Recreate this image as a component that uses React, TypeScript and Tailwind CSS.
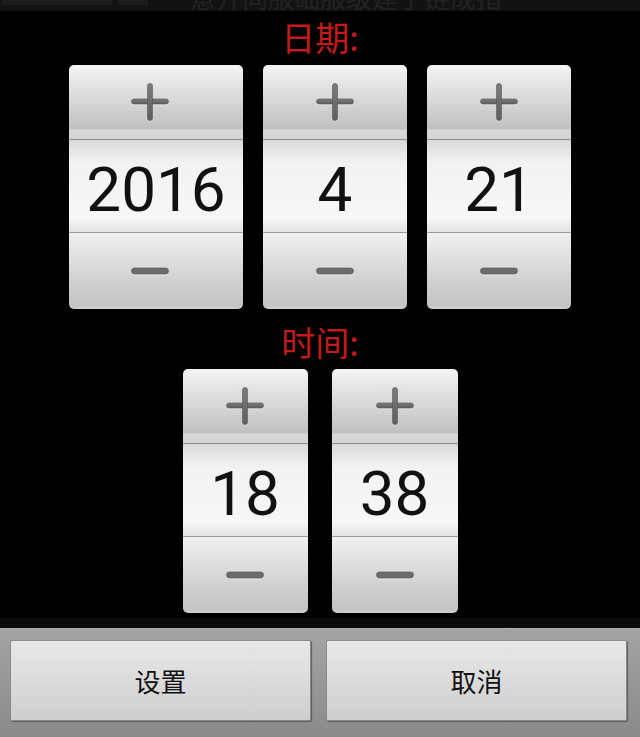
import React from "react";

const cjk = { fontFamily: '"Noto Sans CJK SC", "Noto Sans", sans-serif' };

function PlusIcon() {
  return (
    <svg width="38" height="39" viewBox="0 0 38 39">
      <defs>
        <linearGradient id="pg" x1="0" y1="0" x2="0" y2="1">
          <stop offset="0" stopColor="#7c7c7c" />
          <stop offset="1" stopColor="#5e5e5e" />
        </linearGradient>
      </defs>
      <g fill="#e6e6e6" opacity="0.8">
        <rect x="0.5" y="17.5" width="37" height="5" rx="2.5" />
        <rect x="16.5" y="1.5" width="5" height="37" rx="2.5" />
      </g>
      <g fill="url(#pg)" stroke="#555" strokeWidth="0.6">
        <rect x="0.5" y="16" width="37" height="5" rx="2.5" />
        <rect x="16.5" y="0.5" width="5" height="37" rx="2.5" />
      </g>
    </svg>
  );
}

function MinusIcon() {
  return (
    <svg width="38" height="9" viewBox="0 0 38 9">
      <rect x="0.5" y="2.5" width="37" height="6" rx="3" fill="#e6e6e6" opacity="0.8" />
      <rect x="0.5" y="1" width="37" height="6" rx="3" fill="#6c6c6c" stroke="#555" strokeWidth="0.6" />
    </svg>
  );
}

interface PickerProps {
  value: string;
  width: string;
  iconShift?: boolean;
}

function Picker({ value, width, iconShift }: PickerProps) {
  const shift = iconShift ? "pr-[12px]" : "";
  return (
    <div className={`${width} h-[244px] flex flex-col rounded-[5px] overflow-hidden`}>
      <div className={`h-[75px] flex items-center justify-center border-b border-[#8c8c8c] bg-[linear-gradient(to_bottom,#f4f4f4,#c0c0c0_86%,#d9d9d9_88%,#d4d4d4)] ${shift}`}>
        <PlusIcon />
      </div>
      <div className="h-[93px] pt-[7px] flex items-center justify-center border-b border-[#9a9a9a] bg-[linear-gradient(to_bottom,#d9d9d9,#f2f2f2_25%,#f7f7f7_85%,#e2e2e2)]">
        <span className="text-[62px] leading-none text-[#111]" style={{ fontFamily: "Roboto, sans-serif" }}>
          {value}
        </span>
      </div>
      <div className={`flex-1 flex items-center justify-center bg-[linear-gradient(to_bottom,#f1f1f1,#d2d2d2_60%,#c4c4c4_95%,#d0d0d0)] ${shift}`}>
        <MinusIcon />
      </div>
    </div>
  );
}

export default function App() {
  return (
    <div className="w-[640px] h-[737px] flex flex-col bg-black overflow-hidden" style={cjk}>
      <div className="h-[11px] overflow-hidden bg-[#121212] flex">
        <div className="w-[150px] flex gap-[6px] pl-[2px]">
          <div className="w-[110px] h-[5px] bg-[#1c1c1c]" />
          <div className="w-[30px] h-[5px] bg-[#1c1c1c]" />
        </div>
        <div className="pl-[40px] -mt-[17px] text-[26px] leading-[28px] text-[#232323] whitespace-nowrap">
          意开向服础服级建了链成措
        </div>
      </div>

      <div className="h-[607px] flex flex-col items-center">
        <div className="pt-[5px] h-[54px] text-[34px] leading-[42px] text-[#c31a1a]">日期:</div>
        <div className="flex gap-[20px]">
          <Picker value="2016" width="w-[174px]" iconShift />
          <Picker value="4" width="w-[144px]" />
          <Picker value="21" width="w-[144px]" />
        </div>
        <div className="mt-[12px] mb-[6px] text-[34px] leading-[42px] text-[#c31a1a]">时间:</div>
        <div className="flex gap-[24px]">
          <Picker value="18" width="w-[125px]" />
          <Picker value="38" width="w-[126px]" />
        </div>
      </div>

      <div className="h-[10px] bg-[#0b0b0b]" />

      <div className="flex-1 border-t border-[#b2b2b2] bg-[linear-gradient(to_bottom,#a4a4a4,#8a8a8a)] pt-[11px] pl-[10px] pr-[13px]">
        <div className="grid grid-cols-2 gap-[15px]">
          {["设置", "取消"].map((t) => (
            <button
              key={t}
              className="h-[81px] rounded-[2px] border border-[#8a8a8a] bg-[linear-gradient(to_bottom,#e8e8e8,#cecece)] shadow-[1px_1px_1px_#5c5c5c] text-[26px] text-[#111] flex items-center justify-center"
            >
              {t}
            </button>
          ))}
        </div>
      </div>
    </div>
  );
}
